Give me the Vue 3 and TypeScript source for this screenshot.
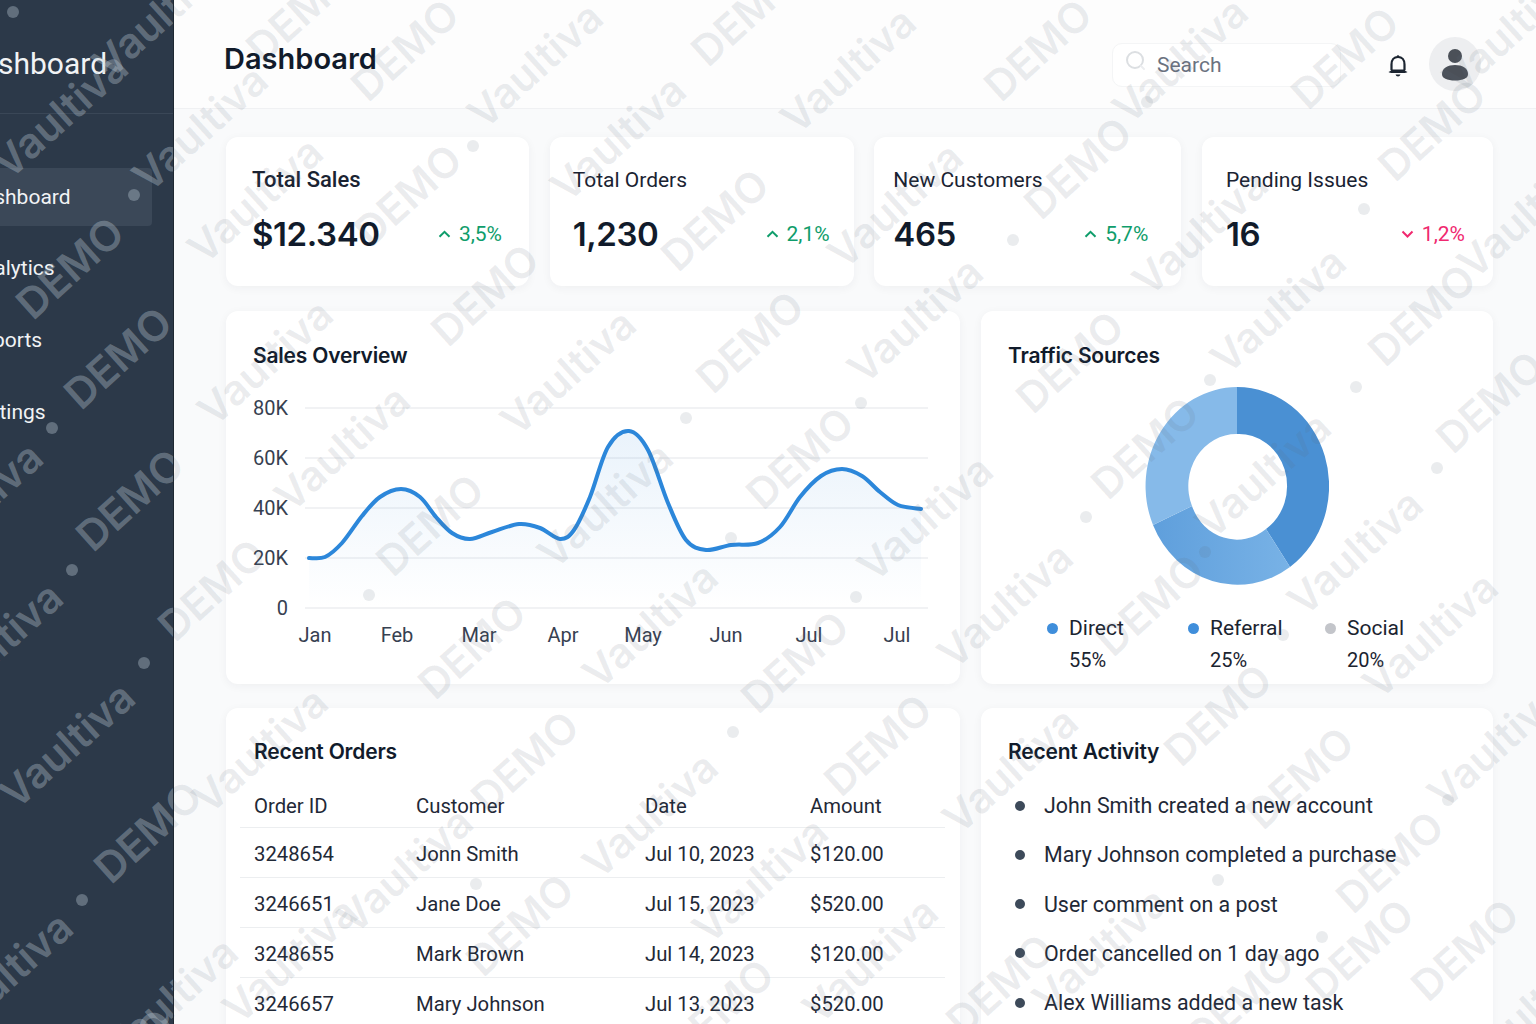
<script setup lang="ts">
import { computed } from "vue";

type Mark = [string, number, number];

const SIDEBAR_WIDTH = 174;

const stats = [
  { label: "Total Sales", value: "$12.340", delta: "3,5%", up: true },
  { label: "Total Orders", value: "1,230", delta: "2,1%", up: true },
  { label: "New Customers", value: "465", delta: "5,7%", up: true },
  { label: "Pending Issues", value: "16", delta: "1,2%", up: false },
];

const navItems = [
  { label: "Dashboard", active: true },
  { label: "Analytics", active: false },
  { label: "Reports", active: false },
  { label: "Settings", active: false },
];

const yTicks = [
  { label: "80K", y: 408 },
  { label: "60K", y: 458 },
  { label: "40K", y: 508 },
  { label: "20K", y: 558 },
  { label: "0", y: 608 },
];

const xTicks = [
  { label: "Jan", x: 315 },
  { label: "Feb", x: 397 },
  { label: "Mar", x: 479 },
  { label: "Apr", x: 563 },
  { label: "May", x: 643 },
  { label: "Jun", x: 726 },
  { label: "Jul", x: 809 },
  { label: "Jul", x: 897 },
];

const linePoints: [number, number][] = [
  [309, 558], [325, 557], [342, 543], [362, 516], [380, 497], [401, 489], [420, 497],
  [436, 517], [452, 533], [470, 539], [492, 532], [519, 524], [540, 528], [560, 539],
  [574, 530], [590, 497], [608, 447], [629, 431], [648, 450], [668, 503], [686, 540],
  [706, 550], [731, 545], [758, 543], [780, 527], [800, 497], [821, 476], [842, 469],
  [862, 476], [880, 492], [898, 505], [921, 509],
];

// catmull-rom through the sampled points
const linePath = computed(() => {
  const p = linePoints;
  let d = `M${p[0][0]} ${p[0][1]}`;
  for (let i = 0; i < p.length - 1; i++) {
    const a = p[Math.max(i - 1, 0)];
    const b = p[i];
    const c = p[i + 1];
    const e = p[Math.min(i + 2, p.length - 1)];
    const c1x = b[0] + (c[0] - a[0]) / 6;
    const c1y = b[1] + (c[1] - a[1]) / 6;
    const c2x = c[0] - (e[0] - b[0]) / 6;
    const c2y = c[1] - (e[1] - b[1]) / 6;
    d += ` C${c1x.toFixed(1)} ${c1y.toFixed(1)} ${c2x.toFixed(1)} ${c2y.toFixed(1)} ${c[0]} ${c[1]}`;
  }
  return d;
});
const areaPath = computed(() => `${linePath.value} L921 608 L309 608 Z`);

const legend = [
  { label: "Direct", pct: "55%", color: "#3f8edb" },
  { label: "Referral", pct: "25%", color: "#3f8edb" },
  { label: "Social", pct: "20%", color: "#c3c5ca" },
];

const orders = [
  { id: "3248654", customer: "Jonn Smith", date: "Jul 10, 2023", amount: "$120.00" },
  { id: "3246651", customer: "Jane Doe", date: "Jul 15, 2023", amount: "$520.00" },
  { id: "3248655", customer: "Mark Brown", date: "Jul 14, 2023", amount: "$120.00" },
  { id: "3246657", customer: "Mary Johnson", date: "Jul 13, 2023", amount: "$520.00" },
];

const activity = [
  "John Smith created a new account",
  "Mary Johnson completed a purchase",
  "User comment on a post",
  "Order cancelled on 1 day ago",
  "Alex Williams added a new task",
];

// watermark words, placed by their centre on the page
const marks: Mark[] = [
  ["V", 160, 15], ["V", 60, 115], ["D", 70, 268], ["V", 200, 128], ["D", 300, 12], ["D", 405, 50],
  ["V", 535, 65], ["D", 408, 195], ["V", 255, 200], ["V", 618, 138], ["D", 745, 15], ["D", 485, 295],
  ["V", 265, 362], ["D", 118, 358], ["D", 715, 220], ["V", 848, 70], ["D", 1038, 50], ["V", 895, 205],
  ["D", 1078, 168], ["V", 1180, 60], ["D", 1345, 58], ["D", 1432, 130], ["V", 1510, 30], ["V", 1200, 232],
  ["D", 1422, 315], ["V", 1278, 310], ["V", 1525, 215], ["D", 1070, 362], ["V", 568, 372], ["D", 750, 342],
  ["V", 915, 320], ["D", 800, 458], ["V", 925, 518], ["D", 430, 525], ["V", 342, 448], ["V", 605, 505],
  ["D", 1145, 448], ["V", 1263, 475], ["D", 1490, 402], ["V", 1355, 552], ["V", 1005, 605], ["D", 1150, 605],
  ["V", 1430, 635], ["D", 212, 590], ["V", 650, 625], ["D", 472, 648], ["D", 795, 662], ["D", 878, 745],
  ["V", 1010, 770], ["D", 1218, 715], ["V", 650, 815], ["D", 525, 762], ["D", 1300, 778], ["D", 1390, 862],
  ["V", 1495, 745], ["D", 148, 832], ["V", 67, 745], ["D", 130, 500], ["V", -25, 505], ["V", -5, 645],
  ["V", 5, 975], ["D", 520, 925], ["D", 1465, 950], ["D", 1000, 985], ["V", 260, 750], ["V", 405, 870],
  ["V", 170, 1000], ["V", 760, 880], ["V", 870, 960], ["D", 720, 1010], ["V", 1100, 950], ["D", 1240, 1000],
  ["V", 1530, 1010], ["D", 120, 1060], ["V", 290, 960], ["D", 1360, 950],
];

const dots: [number, number][] = [
  [13, 12], [134, 195], [473, 146], [52, 428], [72, 570], [144, 663], [82, 900], [686, 418],
  [369, 595], [861, 403], [856, 597], [731, 538], [1147, 102], [1364, 209], [1210, 380], [1356, 387],
  [1437, 468], [1086, 517], [1283, 635], [1205, 552], [733, 732], [476, 884], [1218, 880], [1322, 937],
  [1448, 800], [1013, 240],
];

const markStyle = (x: number, y: number, offset = 0) => ({ left: `${x - offset}px`, top: `${y}px` });
</script>

<template>
  <div class="page">
    <aside class="sidebar">
      <div class="brand">Dashboard</div>
      <nav class="nav">
        <a v-for="item in navItems" :key="item.label" class="nav-item" :class="{ active: item.active }">{{ item.label }}</a>
      </nav>
      <div class="wm-layer wm-dark">
        <span v-for="(m, i) in marks" :key="i" class="wm-word" :style="markStyle(m[1], m[2])">{{ m[0] === "V" ? "Vaultiva" : "DEMO" }}</span>
        <i v-for="(d, i) in dots" :key="`d${i}`" class="wm-dot" :style="markStyle(d[0], d[1])"></i>
      </div>
    </aside>

    <div class="main">
      <header class="topbar">
        <h1 class="page-title">Dashboard</h1>
        <div class="search">
          <svg class="search-icon" width="24" height="24" viewBox="0 0 24 24" fill="none">
            <circle cx="11" cy="10" r="8" stroke="#dcdfe2" stroke-width="2" />
            <path d="M17 16l3 3" stroke="#eceef0" stroke-width="2" stroke-linecap="round" />
          </svg>
          <span>Search</span>
        </div>
        <svg class="bell" width="24" height="26" viewBox="0 0 24 26" fill="none">
          <path d="M5.500 17V11.500C5.500 7 8 4 12 4s6.500 3 6.500 7.500V17" stroke="#1c2531" stroke-width="2.200" />
          <path d="M2.500 19c1.500-.8 2.500-1.600 3-2.600h13c.5 1 1.500 1.800 3 2.600-1 .6-2.500 1-3.500 1h-12c-1 0-2.500-.4-3.500-1z" fill="#1c2531" />
          <path d="M9.500 21.500a2.600 2.600 0 0 0 5 0z" fill="#1c2531" />
          <circle cx="12" cy="3.500" r="1.300" fill="#1c2531" />
        </svg>
        <div class="avatar">
          <svg width="28" height="34" viewBox="0 0 28 34" fill="#4b5058">
            <circle cx="14" cy="8" r="7" />
            <path d="M1 26c0-6 6-9 13-9s13 3 13 9c0 2-1 3.500-3 4.500-3 1.500-6 2-10 2s-7-.5-10-2c-2-1-3-2.500-3-4.500z" />
          </svg>
        </div>
      </header>

      <div class="content">
        <section class="stats">
          <div v-for="s in stats" :key="s.label" class="card stat">
            <div class="stat-label">{{ s.label }}</div>
            <div class="stat-row">
              <span class="stat-value">{{ s.value }}</span>
              <span class="stat-delta" :class="s.up ? 'up' : 'down'">
                <svg width="13" height="8" viewBox="0 0 13 8" fill="none">
                  <path :d="s.up ? 'M1.500 6.800L6.500 1.800l5 5' : 'M1.500 1.500L6.500 6.500l5-5'" stroke="currentColor" stroke-width="2" />
                </svg>
                {{ s.delta }}
              </span>
            </div>
          </div>
        </section>

        <section class="panels">
          <div class="card panel">
            <h2 class="panel-title">Sales Overview</h2>
            <svg class="chart" width="700" height="255" viewBox="240 395 700 255">
              <defs>
                <linearGradient id="area" x1="0" y1="0" x2="0" y2="1">
                  <stop offset="0" stop-color="#2b86d9" stop-opacity="0.1" />
                  <stop offset="1" stop-color="#2b86d9" stop-opacity="0" />
                </linearGradient>
              </defs>
              <g v-for="t in yTicks" :key="t.label">
                <line x1="305" x2="928" :y1="t.y" :y2="t.y" stroke="#eceef0" stroke-width="1.500" />
                <text x="288" :y="t.y + 7" text-anchor="end" class="tick">{{ t.label }}</text>
              </g>
              <path :d="areaPath" fill="url(#area)" />
              <path :d="linePath" fill="none" stroke="#2c87da" stroke-width="4" stroke-linecap="round" />
              <text v-for="(t, i) in xTicks" :key="i" :x="t.x" y="642" text-anchor="middle" class="tick">{{ t.label }}</text>
            </svg>
          </div>

          <div class="card panel">
            <h2 class="panel-title">Traffic Sources</h2>
            <svg class="donut" width="184" height="198" viewBox="0 0 184 198">
              <defs>
                <linearGradient id="mid" x1="0" y1="0" x2="1" y2="0">
                  <stop offset="0" stop-color="#5f9fdc" />
                  <stop offset="1" stop-color="#78b2e6" />
                </linearGradient>
              </defs>
              <path d="M92 0A92 99 0 0 1 145 180L121 142A48 52 0 0 0 92 47Z" fill="#4a90d3" />
              <path d="M145 180A92 99 0 0 1 8 138L47 119A48 52 0 0 0 121 142Z" fill="url(#mid)" />
              <path d="M8 138A92 99 0 0 1 92 0L92 47A48 52 0 0 0 47 119Z" fill="#86bae9" />
            </svg>
            <div class="legend">
              <div v-for="l in legend" :key="l.label" class="legend-item">
                <div class="legend-label"><i class="legend-dot" :style="{ background: l.color }"></i>{{ l.label }}</div>
                <div class="legend-pct">{{ l.pct }}</div>
              </div>
            </div>
          </div>
        </section>

        <section class="panels">
          <div class="card panel bottom">
            <h2 class="panel-title">Recent Orders</h2>
            <table class="orders">
              <thead>
                <tr><th>Order ID</th><th>Customer</th><th>Date</th><th>Amount</th></tr>
              </thead>
              <tbody>
                <tr v-for="o in orders" :key="o.id">
                  <td>{{ o.id }}</td><td>{{ o.customer }}</td><td>{{ o.date }}</td><td>{{ o.amount }}</td>
                </tr>
              </tbody>
            </table>
          </div>

          <div class="card panel bottom">
            <h2 class="panel-title">Recent Activity</h2>
            <ul class="activity">
              <li v-for="a in activity" :key="a"><i class="bullet"></i>{{ a }}</li>
            </ul>
          </div>
        </section>
      </div>

      <div class="wm-layer wm-light">
        <span v-for="(m, i) in marks" :key="i" class="wm-word" :style="markStyle(m[1], m[2], SIDEBAR_WIDTH)">{{ m[0] === "V" ? "Vaultiva" : "DEMO" }}</span>
        <i v-for="(d, i) in dots" :key="`d${i}`" class="wm-dot" :style="markStyle(d[0], d[1], SIDEBAR_WIDTH)"></i>
      </div>
    </div>
  </div>
</template>

<style>
html,
body {
  margin: 0;
  background: #f9fafb;
}
</style>

<style scoped>
.page {
  display: flex;
  height: 1024px;
  overflow: hidden;
  font-family: Roboto, "Liberation Sans", sans-serif;
  color: #1b2430;
}

.sidebar {
  position: relative;
  flex: 0 0 173px;
  overflow: hidden;
  background: #2c3949;
  border-right: 1px solid #1e2832;
  color: #f1f3f5;
}

.brand {
  height: 113px;
  box-sizing: border-box;
  padding-top: 46px;
  margin-left: -38px;
  font-size: 30px;
  line-height: 36px;
  white-space: nowrap;
}

.nav {
  border-top: 1px solid #3a4757;
  padding-top: 54px;
  display: flex;
  flex-direction: column;
}

.nav-item {
  display: flex;
  align-items: center;
  height: 72px;
  margin-left: -31px;
  font-size: 21px;
  white-space: nowrap;
}

.nav-item.active {
  height: 58px;
  width: 183px;
  margin-bottom: 6px;
  background: #3b4858;
  border-radius: 4px;
}

.main {
  position: relative;
  flex: 1;
  min-width: 0;
  overflow: hidden;
  background: #f9fafb;
}

.topbar {
  display: flex;
  align-items: center;
  height: 109px;
  box-sizing: border-box;
  padding: 19px 55px 0 50px;
  background: #fdfdfd;
  border-bottom: 1px solid #f0f1f3;
}

.page-title {
  flex: 1;
  margin: -11px 0 0;
  font-family: Inter, sans-serif;
  font-size: 29px;
  font-weight: 600;
  color: #111b2b;
}

.search {
  display: flex;
  align-items: center;
  gap: 9px;
  width: 229px;
  height: 44px;
  box-sizing: border-box;
  margin-top: 2px;
  padding-left: 11px;
  background: #fff;
  border: 1px solid #f4f5f6;
  border-radius: 10px;
  font-size: 21px;
  color: #6b7280;
}

.search-icon {
  margin-top: -5px;
}

.bell {
  margin: 4px 19px 0 45px;
}

.avatar {
  display: flex;
  align-items: flex-end;
  justify-content: center;
  width: 52px;
  height: 54px;
  box-sizing: border-box;
  padding-bottom: 9px;
  background: #edeef0;
  border-radius: 50%;
}

.content {
  display: flex;
  flex-direction: column;
  gap: 24px;
  padding: 28px 43px 0 52px;
}

.card {
  background: #fff;
  border-radius: 12px;
  box-shadow: 0 2px 10px rgba(30, 40, 55, 0.05);
}

.stats {
  display: grid;
  grid-template-columns: 303px 304px 307px 291px;
  justify-content: space-between;
  margin-bottom: 1px;
}

.stat {
  height: 149px;
  box-sizing: border-box;
  padding: 30px 27px 0 26px;
}

.stat:nth-child(2) {
  padding-left: 23px;
  padding-right: 24px;
}

.stat:nth-child(3) {
  padding-left: 19px;
  padding-right: 33px;
}

.stat:nth-child(4) {
  padding-left: 24px;
  padding-right: 28px;
}

.stat-label {
  font-size: 21px;
  line-height: 26px;
  color: #1a2332;
}

.stat:first-child .stat-label {
  font-size: 22px;
  font-weight: 500;
}

.stat-row {
  display: flex;
  align-items: center;
  justify-content: space-between;
  margin-top: 19px;
}

.stat-value {
  font-family: Inter, sans-serif;
  font-size: 33px;
  line-height: 44px;
  font-weight: 600;
  letter-spacing: -0.4px;
  color: #111b2b;
}

.stat-delta {
  display: flex;
  align-items: center;
  gap: 8px;
  font-size: 21px;
}

.stat-delta.up {
  color: #0f9d6b;
}

.stat-delta.down {
  color: #f0296f;
}

.panels {
  display: grid;
  grid-template-columns: 734px 512px;
  justify-content: space-between;
}

.panel {
  height: 373px;
  box-sizing: border-box;
  padding: 32px 26px 0 27px;
}

.panel.bottom {
  height: 340px;
  padding-top: 31px;
  padding-left: 28px;
}

.panel.bottom:last-child {
  padding-left: 27px;
}

.panel-title {
  margin: 0;
  font-family: Inter, sans-serif;
  font-size: 21px;
  line-height: 26px;
  font-weight: 600;
  letter-spacing: -0.2px;
  color: #111b2b;
}

.chart {
  display: block;
  margin: 26px 0 0 -13px;
}

.tick {
  font-size: 20px;
  fill: #374151;
}

.donut {
  display: block;
  margin: 18px 0 0 137px;
}

.legend {
  display: grid;
  grid-template-columns: 141px 137px auto;
  margin: 30px 0 0 39px;
}

.legend-label {
  display: flex;
  align-items: center;
  gap: 11px;
  font-size: 21px;
  line-height: 26px;
}

.legend-dot {
  width: 11px;
  height: 11px;
  border-radius: 50%;
}

.legend-pct {
  margin-top: 6px;
  padding-left: 22px;
  font-size: 20px;
  line-height: 26px;
}

.orders {
  width: 705px;
  margin: 19px 0 0 -14px;
  border-collapse: collapse;
  table-layout: fixed;
  font-size: 20.3px;
  color: #1f2937;
}

.orders th,
.orders td {
  height: 47px;
  padding: 2px 0 0;
  text-align: left;
  font-weight: 400;
  border-bottom: 1px solid #eceef0;
}

.orders th {
  height: 43px;
  padding-top: 0;
}

.orders th:nth-child(1),
.orders td:nth-child(1) {
  width: 162px;
  padding-left: 14px;
}

.orders th:nth-child(2),
.orders td:nth-child(2) {
  width: 229px;
}

.orders th:nth-child(3),
.orders td:nth-child(3) {
  width: 165px;
}

.activity {
  list-style: none;
  margin: 16px 0 0;
  padding: 0;
  font-size: 21.4px;
  color: #1f2937;
}

.activity li {
  display: flex;
  align-items: center;
  height: 49.25px;
  white-space: nowrap;
}

.bullet {
  width: 10px;
  height: 10px;
  margin: 0 19px 0 7px;
  border-radius: 50%;
  background: #3d4a5a;
}

.wm-layer {
  position: absolute;
  inset: 0;
  overflow: hidden;
  pointer-events: none;
}

.wm-word {
  position: absolute;
  transform: translate(-50%, -50%) rotate(-42deg);
  font-family: Inter, sans-serif;
  font-size: 42px;
  font-weight: 600;
  line-height: 1;
  white-space: nowrap;
}

.wm-dot {
  position: absolute;
  width: 12px;
  height: 12px;
  margin: -6px 0 0 -6px;
  border-radius: 50%;
}

.wm-dark .wm-word {
  color: rgba(190, 205, 215, 0.36);
}

.wm-dark .wm-dot {
  background: rgba(190, 205, 215, 0.36);
}

.wm-light .wm-word {
  color: rgba(95, 110, 125, 0.13);
}

.wm-light .wm-dot {
  background: rgba(95, 110, 125, 0.13);
}
</style>
